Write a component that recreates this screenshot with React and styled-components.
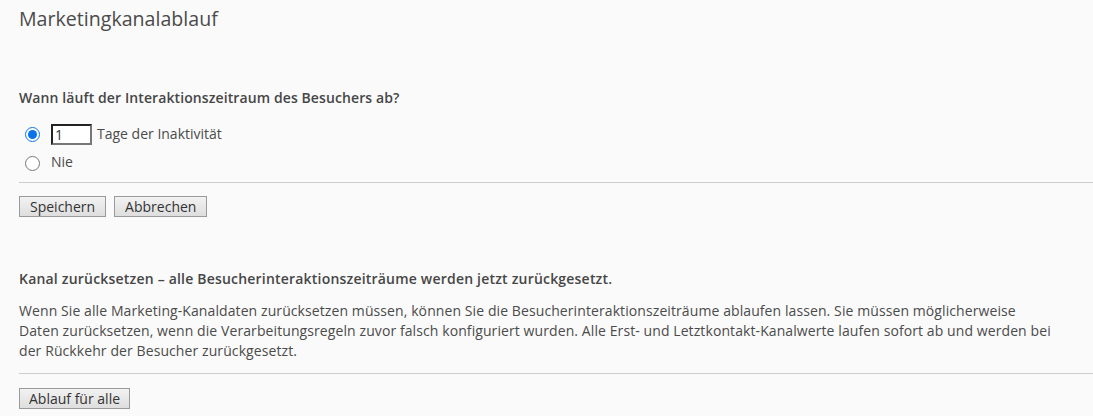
import React from "react";
import styled, { createGlobalStyle } from "styled-components";

const GlobalStyle = createGlobalStyle`
  html, body {
    margin: 0;
    padding: 0;
    background: #fafafa;
  }
  body {
    font-family: "Open Sans", "Noto Sans", sans-serif;
    color: #4b4b4b;
  }
`;

const Page = styled.main`
  padding: 5px 0 0 19px;
  min-height: 411px;
  box-sizing: border-box;
`;

const Title = styled.h1`
  margin: 0;
  font-size: 19.6px;
  line-height: 28px;
  font-weight: 400;
  color: #4b4b4b;
`;

const Section = styled.section`
  margin-top: ${(p) => p.$top}px;
`;

const Heading = styled.h2`
  margin: 0;
  font-size: 14px;
  line-height: 20px;
  font-weight: 600;
  color: #464646;
  letter-spacing: ${(p) => p.$spacing ?? 0.2}px;
`;

const Options = styled.div`
  margin-top: 12px;
  display: flex;
  flex-direction: column;
`;

const OptionRow = styled.label`
  display: flex;
  align-items: center;
  height: 28px;
  font-size: 14px;
  line-height: 20px;
`;

const Radio = styled.input.attrs({ type: "radio" })`
  width: 15px;
  height: 15px;
  margin: ${(p) => (p.$low ? "3px" : "1px")} 11px 0 6px;
  accent-color: #0a73eb;
`;

const DaysInput = styled.input.attrs({ type: "text" })`
  box-sizing: border-box;
  width: 41px;
  height: 21px;
  margin: 0 5px 0 0;
  padding: 0 2px;
  border-width: 2px;
  border-style: solid;
  border-color: #222 #777 #777 #222;
  background: #fff;
  font-family: "Open Sans", sans-serif;
  font-size: 14px;
  color: #333;
  outline: none;
`;

const Rule = styled.hr`
  margin: ${(p) => p.$top}px 0 0 0;
  border: none;
  border-top: 1px solid #cdcdcd;
  height: 0;
`;

const ButtonRow = styled.div`
  display: flex;
  gap: 8px;
  margin-top: ${(p) => p.$top}px;
`;

const Button = styled.button`
  box-sizing: border-box;
  height: 21px;
  padding: 0 ${(p) => p.$pad}px;
  border: 1px solid #9a9a9a;
  border-radius: 0;
  background: linear-gradient(#f2f2f2, #dedede);
  font-family: "Open Sans", sans-serif;
  font-size: 14px;
  line-height: 19px;
  color: #333;
  cursor: pointer;
`;

const Paragraph = styled.p`
  margin: 12px 0 0 0;
  max-width: 1038px;
  font-size: 14px;
  line-height: 20px;
  letter-spacing: 0.09px;
`;

export default function App() {
  return (
    <>
      <GlobalStyle />
      <Page>
        <Title>Marketingkanalablauf</Title>

        <Section $top={55}>
          <Heading $spacing={0.1}>Wann läuft der Interaktionszeitraum des Besuchers ab?</Heading>
          <Options>
            <OptionRow>
              <Radio name="expire" defaultChecked />
              <DaysInput defaultValue="1" />
              Tage der Inaktivität
            </OptionRow>
            <OptionRow>
              <Radio name="expire" $low />
              Nie
            </OptionRow>
          </Options>
          <Rule $top={6} />
          <ButtonRow $top={13}>
            <Button $pad={10}>Speichern</Button>
            <Button $pad={10}>Abbrechen</Button>
          </ButtonRow>
        </Section>

        <Section $top={52}>
          <Heading>Kanal zurücksetzen – alle Besucherinteraktionszeiträume werden jetzt zurückgesetzt.</Heading>
          <Paragraph>
            Wenn Sie alle Marketing-Kanaldaten zurücksetzen müssen, können Sie die Besucherinteraktionszeiträume ablaufen lassen. Sie müssen möglicherweise Daten zurücksetzen, wenn die Verarbeitungsregeln zuvor falsch konfiguriert wurden. Alle Erst- und Letztkontakt-Kanalwerte laufen sofort ab und werden bei der Rückkehr der Besucher zurückgesetzt.
          </Paragraph>
          <Rule $top={12} />
          <ButtonRow $top={14}>
            <Button $pad={9}>Ablauf für alle</Button>
          </ButtonRow>
        </Section>
      </Page>
    </>
  );
}
